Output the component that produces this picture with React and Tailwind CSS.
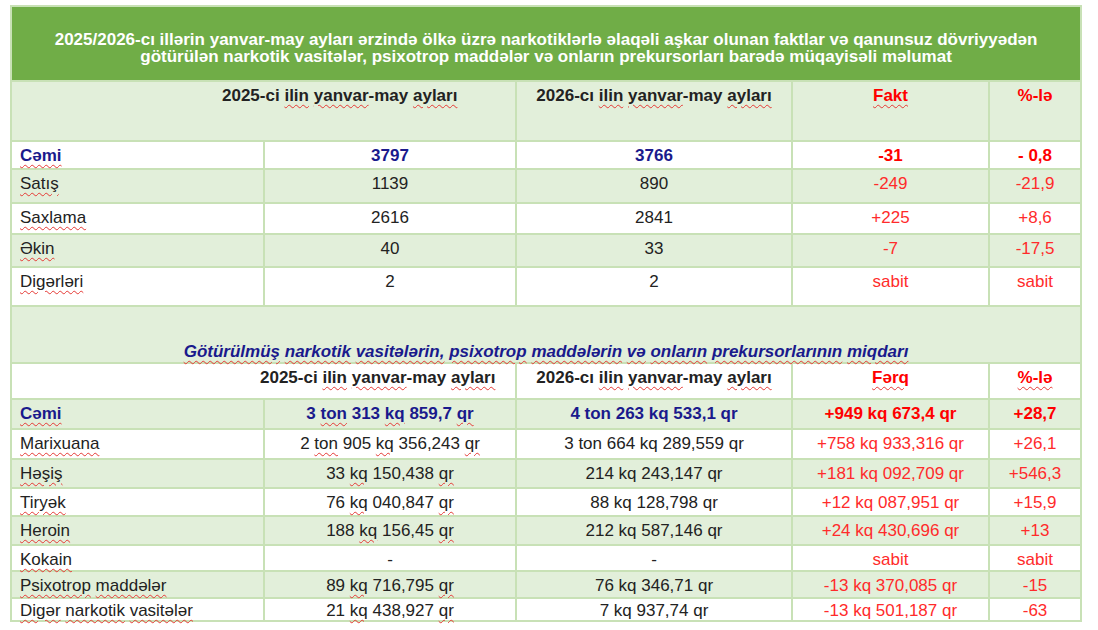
const top = [
  { label: "Cəmi", a: "3797", b: "3766", f: "-31", p: "- 0,8", total: true },
  { label: "Satış", a: "1139", b: "890", f: "-249", p: "-21,9" },
  { label: "Saxlama", a: "2616", b: "2841", f: "+225", p: "+8,6" },
  { label: "Əkin", a: "40", b: "33", f: "-7", p: "-17,5" },
  { label: "Digərləri", a: "2", b: "2", f: "sabit", p: "sabit" },
];

const bottom = [
  { label: "Cəmi", a: "3 ton 313 kq 859,7 qr", b: "4 ton 263 kq 533,1 qr", f: "+949 kq 673,4 qr", p: "+28,7", total: true },
  { label: "Marixuana", a: "2 ton 905 kq 356,243 qr", b: "3 ton 664 kq 289,559 qr", f: "+758 kq 933,316 qr", p: "+26,1" },
  { label: "Həşiş", a: "33 kq 150,438 qr", b: "214 kq 243,147 qr", f: "+181 kq 092,709 qr", p: "+546,3" },
  { label: "Tiryək", a: "76 kq 040,847 qr", b: "88 kq 128,798 qr", f: "+12 kq 087,951 qr", p: "+15,9" },
  { label: "Heroin", a: "188 kq 156,45 qr", b: "212 kq 587,146 qr", f: "+24 kq 430,696 qr", p: "+13" },
  { label: "Kokain", a: "-", b: "-", f: "sabit", p: "sabit" },
  { label: "Psixotrop maddələr", a: "89 kq 716,795 qr", b: "76 kq 346,71 qr", f: "-13 kq 370,085 qr", p: "-15" },
  { label: "Digər narkotik vasitələr", a: "21 kq 438,927 qr", b: "7 kq 937,74 qr", f: "-13 kq 501,187 qr", p: "-63" },
];

const topHeights = ["h-[28px]", "h-[34px]", "h-[31px]", "h-[33px]", "h-[39px]"];
const bottomHeights = ["h-[30px]", "h-[30px]", "h-[29px]", "h-[28px]", "h-[29px]", "h-[26px]", "h-[27px]", "h-[23px]"];

// red squiggle like a spellchecker
function W({ children }) {
  return (
    <span className="underline decoration-wavy decoration-[#e53935] decoration-1 underline-offset-[3px]">
      {children}
    </span>
  );
}

// underline every word
function Squiggly({ text }) {
  const words = text.split(" ");
  return words.map((w, i) => (
    <span key={i}>
      <W>{w}</W>
      {i < words.length - 1 ? " " : ""}
    </span>
  ));
}

// underline only unit words (ton, kq, qr)
function Units({ text }) {
  const words = text.split(" ");
  return words.map((w, i) => (
    <span key={i}>
      {["ton", "kq", "qr"].includes(w) ? <W>{w}</W> : w}
      {i < words.length - 1 ? " " : ""}
    </span>
  ));
}

function Period({ year, suffix }) {
  return (
    <>
      {year}-{suffix} <W>ilin</W> <W>yanvar</W>-may <W>ayları</W>
    </>
  );
}

const cell = "border-2 border-[#c8e1b6] align-top pb-0 px-2";

export default function App() {
  return (
    <div className="bg-white w-[1098px] h-[630px] pt-[5px] pl-[10px] font-['Liberation_Sans',Arial,sans-serif] text-[17px] leading-[19px] text-[#222]">
      <table className="table-fixed border-collapse w-[1070px]">
        <colgroup>
          <col className="w-[253px]" />
          <col className="w-[252px]" />
          <col className="w-[276px]" />
          <col className="w-[197px]" />
          <col className="w-[92px]" />
        </colgroup>
        <tbody>
          <tr className="h-[75px]">
            <td
              colSpan={5}
              className="bg-[#70ad47] border-2 border-[#c8e1b6] text-white font-bold text-[17px] leading-[17px] text-center align-middle pt-[8px]"
            >
              2025/2026-cı illərin yanvar-may ayları ərzində ölkə üzrə narkotiklərlə əlaqəli aşkar olunan faktlar və qanunsuz dövriyyədən
              <br />
              götürülən narkotik vasitələr, psixotrop maddələr və onların prekursorları barədə müqayisəli məlumat
            </td>
          </tr>

          <tr className="h-[60px] bg-[#e2efda] font-bold">
            <td colSpan={2} className={`${cell} pt-[4px] pl-[210px]`}>
              <Period year="2025" suffix="ci" />
            </td>
            <td className={`${cell} pt-[4px] text-center`}>
              <Period year="2026" suffix="cı" />
            </td>
            <td className={`${cell} pt-[4px] text-center text-[#ff0000]`}>
              <W>Fakt</W>
            </td>
            <td className={`${cell} pt-[4px] text-center text-[#ff0000]`}>%-lə</td>
          </tr>

          {top.map((r, i) => {
            const c = `${cell} pt-[4px]`;
            return (
              <tr
                key={r.label}
                className={`${topHeights[i]} ${i % 2 === 0 ? "bg-white" : "bg-[#e2efda]"} ${r.total ? "font-bold" : ""}`}
              >
                <td className={`${c} ${r.total ? "text-[#1a1a8c]" : ""}`}>
                  <Squiggly text={r.label} />
                </td>
                <td className={`${c} text-center ${r.total ? "text-[#1a1a8c]" : ""}`}>{r.a}</td>
                <td className={`${c} text-center ${r.total ? "text-[#1a1a8c]" : ""}`}>{r.b}</td>
                <td className={`${c} text-center ${r.total ? "text-[#ff0000]" : "text-[#ff2b2b]"}`}>{r.f}</td>
                <td className={`${c} text-center ${r.total ? "text-[#ff0000]" : "text-[#ff2b2b]"}`}>{r.p}</td>
              </tr>
            );
          })}

          <tr className="h-[57px] bg-[#e2efda]">
            <td
              colSpan={5}
              className="border-2 border-[#c8e1b6] align-bottom text-center font-bold italic text-[#1a1a8c] pb-[1px]"
            >
              <Squiggly text="Götürülmüş narkotik vasitələrin, psixotrop maddələrin və onların prekursorlarının miqdarı" />
            </td>
          </tr>

          <tr className="h-[36px] bg-white font-bold">
            <td colSpan={2} className={`${cell} pt-[4px] pl-[248px]`}>
              <Period year="2025" suffix="ci" />
            </td>
            <td className={`${cell} pt-[4px] text-center`}>
              <Period year="2026" suffix="cı" />
            </td>
            <td className={`${cell} pt-[4px] text-center text-[#ff0000]`}>
              <W>Fərq</W>
            </td>
            <td className={`${cell} pt-[4px] text-center text-[#ff0000]`}>
              <W>%-lə</W>
            </td>
          </tr>

          {bottom.map((r, i) => {
            const c = `${cell} ${i === bottom.length - 1 ? "pt-[2px]" : "pt-[4px]"}`;
            return (
              <tr
                key={r.label}
                className={`${bottomHeights[i]} ${i % 2 === 0 ? "bg-[#e2efda]" : "bg-white"} ${r.total ? "font-bold" : ""}`}
              >
                <td className={`${c} ${r.total ? "text-[#1a1a8c]" : ""}`}>
                  <Squiggly text={r.label} />
                </td>
                <td className={`${c} text-center ${r.total ? "text-[#1a1a8c]" : ""}`}>
                  <Units text={r.a} />
                </td>
                <td className={`${c} text-center ${r.total ? "text-[#1a1a8c]" : ""}`}>{r.b}</td>
                <td className={`${c} text-center ${r.total ? "text-[#ff0000]" : "text-[#ff2b2b]"}`}>{r.f}</td>
                <td className={`${c} text-center ${r.total ? "text-[#ff0000]" : "text-[#ff2b2b]"}`}>{r.p}</td>
              </tr>
            );
          })}
        </tbody>
      </table>
    </div>
  );
}
